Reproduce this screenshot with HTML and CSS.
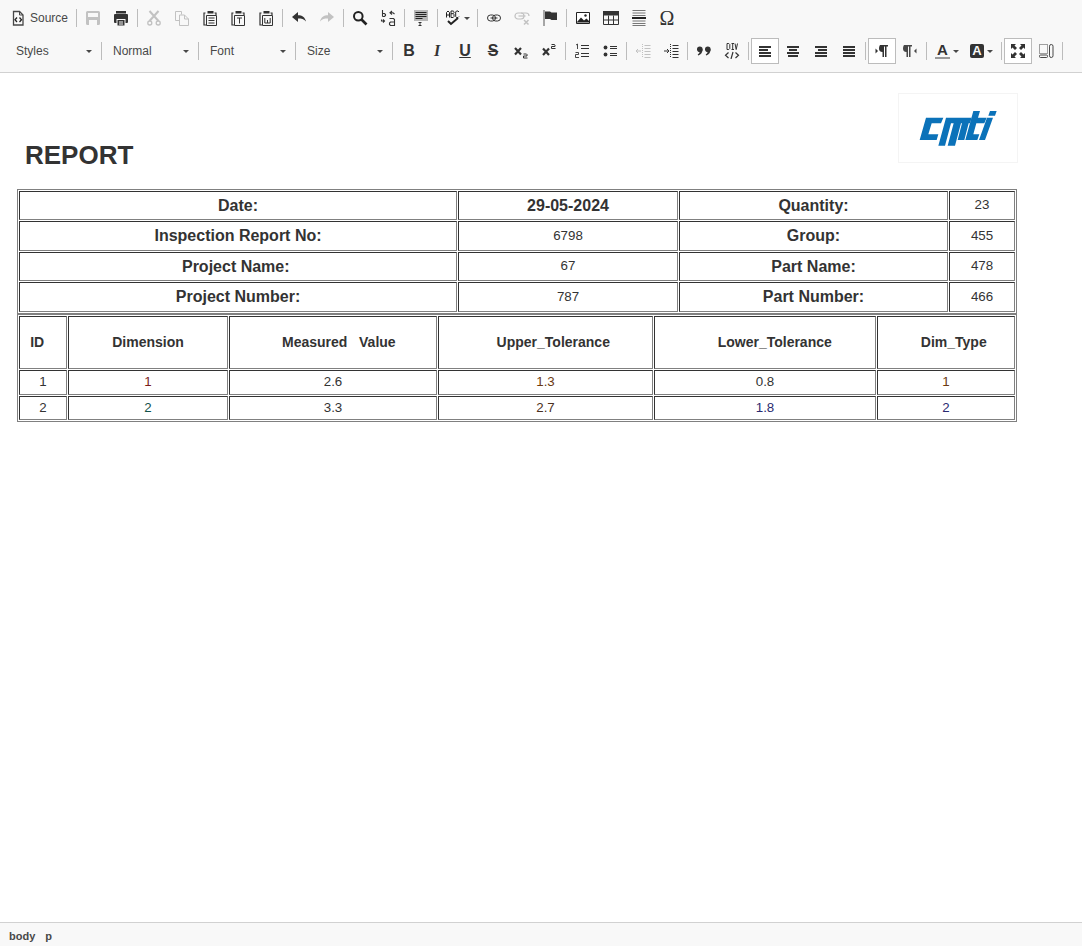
FILE: index.html
```html
<!DOCTYPE html>
<html>
	<head>
		<meta charset="UTF-8">
		<title>Report</title>
		<link rel="stylesheet" href="styles.css">
	</head>
	<body>
		<div class="toolbar">
			<div class="tool-row">
				<a class="btn btn-text">
					<svg width="16" height="16" viewBox="0 0 16 16"><path d="M3.500 1.500h6l3.500 3.500v10h-9.500z" fill="none" stroke="#474747" stroke-width="1.300"/><path d="M9.500 1.500v3.500h3.500" fill="none" stroke="#474747"/><path d="M7 7.500l-2 2.300 2 2.200M9.500 7.500l2 2.300-2 2.200" fill="none" stroke="#222" stroke-width="1.300"/></svg>
					<span>Source</span>
				</a>
				<i class="sep"></i>
				<a class="btn off"><svg width="16" height="16" viewBox="0 0 16 16"><path fill-rule="evenodd" d="M1 2.500q0-1.500 1.500-1.500h11q1.500 0 1.500 1.500v11q0 1.500-1.500 1.500h-11q-1.500 0-1.500-1.500zM3 3v4h10V3zM4 10v5h8v-5z" fill="#474747"/></svg></a>
				<a class="btn"><svg width="16" height="16" viewBox="0 0 16 16"><path fill-rule="evenodd" d="M3 1h10v2.500H3zM1 5q0-1 1-1h12q1 0 1 1v7q0 1-1 1h-1.500v-4h-9v4H2q-1 0-1-1zM4.500 10h7v5.500h-7zM6 11.500v1h4v-1zM6 13.500v1h4v-1z" fill="#333"/></svg></a>
				<i class="sep"></i>
				<a class="btn off"><svg width="16" height="16" viewBox="0 0 16 16"><path d="M3.500 1l9 10M12.500 1l-9 10" stroke="#474747" stroke-width="2" fill="none"/><circle cx="3.800" cy="13" r="2" fill="none" stroke="#474747" stroke-width="1.300"/><circle cx="12.200" cy="13" r="2" fill="none" stroke="#474747" stroke-width="1.300"/></svg></a>
				<a class="btn off"><svg width="16" height="16" viewBox="0 0 16 16"><path d="M1.500 1.500h6v3M1.500 1.500v9h4M5.500 5h5l4 4v6.500h-9zM10.500 5v4h4" fill="none" stroke="#474747"/></svg></a>
				<a class="btn"><svg width="16" height="16" viewBox="0 0 16 16"><path d="M3.500 3H2v12h2M12.500 3h1.500v2" fill="none" stroke="#333" stroke-width="1.200"/><path d="M5.500 1h6v2.500h-6z" fill="#333"/><path d="M4.500 5.500h10v10h-10z" fill="#f8f8f8" stroke="#333"/><path d="M6.500 8h6M6.500 10.500h6M6.500 13h6" stroke="#333"/></svg></a>
				<a class="btn"><svg width="16" height="16" viewBox="0 0 16 16"><path d="M3.500 3H2v12h2M12.500 3h1.500v2" fill="none" stroke="#333" stroke-width="1.200"/><path d="M5.500 1h6v2.500h-6z" fill="#333"/><path d="M4.500 5.500h10v10h-10z" fill="#f8f8f8" stroke="#333"/><path d="M7 8h5M9.500 8v5.500" stroke="#333"/></svg></a>
				<a class="btn"><svg width="16" height="16" viewBox="0 0 16 16"><path d="M3.500 3H2v12h2M12.500 3h1.500v2" fill="none" stroke="#333" stroke-width="1.200"/><path d="M5.500 1h6v2.500h-6z" fill="#333"/><path d="M4.500 5.500h10v10h-10z" fill="#f8f8f8" stroke="#333"/><path d="M6.800 8v5h5.400V8M9.500 10v3" fill="none" stroke="#333"/></svg></a>
				<i class="sep"></i>
				<a class="btn"><svg width="16" height="16" viewBox="0 0 16 16"><path d="M1 7l6-5v3.200c4 0 7 1.800 8 6.300-2-2.500-4.500-3-8-3V12z" fill="#333"/></svg></a>
				<a class="btn off"><svg width="16" height="16" viewBox="0 0 16 16"><path d="M15 7L9 2v3.200c-4 0-7 1.800-8 6.300 2-2.500 4.500-3 8-3V12z" fill="#474747"/></svg></a>
				<i class="sep"></i>
				<a class="btn"><svg width="16" height="16" viewBox="0 0 16 16"><circle cx="6.300" cy="6.300" r="4.300" fill="none" stroke="#222" stroke-width="2"/><path d="M9.500 9.500l5 5" stroke="#222" stroke-width="2.600"/></svg></a>
				<a class="btn"><svg width="16" height="16" viewBox="0 0 16 16"><path d="M2.500 0v6.500M2.500 3.500h2l1 1v1l-1 1h-2M12 1l-2 1.800 2 1.700M10 2.800h3l1.500 1.200M1.500 9.500v1.500h3M3 9.500l1.500 1.500L3 12.500M9.500 8.500h4l1 1v6.500M14.500 12h-4l-1 1v1.500l1 1h4" fill="none" stroke="#333" stroke-width="1.100"/></svg></a>
				<i class="sep"></i>
				<a class="btn"><svg width="16" height="16" viewBox="0 0 16 16"><path d="M1 0h14v11H1z" fill="#b8b8b8"/><path d="M2.500 2.500h11M2.500 4.500h11M2.500 6.500h11M2.500 8.500h7" stroke="#222"/><path d="M5.500 12.500h3M7 12.500v3M5.500 15.500h3" stroke="#333"/></svg></a>
				<i class="sep"></i>
				<a class="btn btn-arrow"><svg width="16" height="16" viewBox="0 0 16 16"><path d="M1.500 7.500V2.500L3 1l1.500 1.500v5M1.500 5h3M6 1v6.500M6 1h2.200l.8.800v1l-.8.900H6M8.200 3.700l.8.900v2l-.8.900H6M14 2l-1-1h-1.500l-.8 1v4.500l.8 1H13l1-1" fill="none" stroke="#222"/><path d="M3 11l3 3 7-6" fill="none" stroke="#222" stroke-width="2"/></svg><b class="caret"></b></a>
				<i class="sep"></i>
				<a class="btn"><svg width="16" height="16" viewBox="0 0 16 16"><rect x="1.500" y="5" width="8" height="6" rx="3" fill="none" stroke="#333"/><rect x="6.500" y="5" width="8" height="6" rx="3" fill="none" stroke="#333"/><path d="M4.500 8h7" stroke="#333"/></svg></a>
				<a class="btn off"><svg width="16" height="16" viewBox="0 0 16 16"><rect x="1" y="3" width="9" height="6" rx="3" fill="none" stroke="#474747" stroke-width="1.200"/><path d="M7 3h5q3 0 3 3" fill="none" stroke="#474747" stroke-width="1.200"/><path d="M4.500 6h7" stroke="#474747" stroke-width="1.200"/><path d="M10 10l4.500 4.500M14.500 10L10 14.500" stroke="#474747" stroke-width="1.500"/></svg></a>
				<a class="btn"><svg width="16" height="16" viewBox="0 0 16 16"><path d="M2 0v16" stroke="#555"/><path d="M3 1.500h5l1.500 1h5.500v7.500H9.500L8 9H3z" fill="#333"/></svg></a>
				<i class="sep"></i>
				<a class="btn"><svg width="16" height="16" viewBox="0 0 16 16"><path d="M1.500 2.500h13v11h-13z" fill="#fff" stroke="#222"/><path d="M2 12l4-4.500 3 3 2.500-2 2.500 2.500v1.500H2z" fill="#222"/><circle cx="10.500" cy="5.500" r="1.200" fill="#222"/></svg></a>
				<a class="btn"><svg width="16" height="16" viewBox="0 0 16 16"><path d="M.5 1.500h15v13H.5z" fill="#f8f8f8" stroke="#333"/><path d="M0 1h16v4.500H0z" fill="#333"/><path d="M.5 10h15M5.500 5.500v9M10.500 5.500v9" stroke="#333"/></svg></a>
				<a class="btn"><svg width="16" height="16" viewBox="0 0 16 16"><path d="M1.500.5h13M1.500 3h13M1.500 5.500h13M1.500 11h13M1.500 13.500h13M1.500 15.500h13" stroke="#777"/><path d="M1 8h14" stroke="#222" stroke-width="2"/></svg></a>
				<a class="btn"><span class="omega">Ω</span></a>
			</div>
			<div class="tool-row">
				<a class="combo"><span>Styles</span><b class="caret"></b></a>
				<i class="sep"></i>
				<a class="combo"><span>Normal</span><b class="caret"></b></a>
				<i class="sep"></i>
				<a class="combo"><span>Font</span><b class="caret"></b></a>
				<i class="sep"></i>
				<a class="combo"><span>Size</span><b class="caret"></b></a>
				<i class="sep"></i>
				<a class="btn"><span class="fmt fmt-b">B</span></a>
				<a class="btn"><span class="fmt fmt-i">I</span></a>
				<a class="btn"><span class="fmt fmt-u">U</span></a>
				<a class="btn"><span class="fmt fmt-s">S</span></a>
				<a class="btn"><svg width="16" height="16" viewBox="0 0 16 16"><path d="M2 5l6 6.500M8 5l-6 6.500" stroke="#333" stroke-width="2.200"/><path d="M10.500 11h3l.5.500v1.500h-3.500v2h4" fill="none" stroke="#333"/></svg></a>
				<a class="btn"><svg width="16" height="16" viewBox="0 0 16 16"><path d="M2 5.500l6 6.500M8 5.500L2 12" stroke="#333" stroke-width="2.200"/><path d="M10.500 1.500h3l.5.500v1.500h-3.500v2h4" fill="none" stroke="#333"/></svg></a>
				<i class="sep"></i>
				<a class="btn"><svg width="16" height="16" viewBox="0 0 16 16"><path d="M7 2.500h8M7 5.500h8M7 10.500h8M7 13.500h8" stroke="#333"/><path d="M2 2l1.500-1v5M1.500 9.500h3v2h-3v3h3.500" fill="none" stroke="#333" stroke-width=".9"/></svg></a>
				<a class="btn"><svg width="16" height="16" viewBox="0 0 16 16"><circle cx="3.500" cy="4.500" r="1.900" fill="#333"/><circle cx="3.500" cy="11.500" r="1.900" fill="#333"/><path d="M8 3.500h7M8 5.500h7M8 10.500h7M8 12.500h7" stroke="#333"/></svg></a>
				<i class="sep"></i>
				<a class="btn off"><svg width="16" height="16" viewBox="0 0 16 16"><path d="M7.500 1v14" stroke="#474747" stroke-dasharray="1 1"/><path d="M9.500 2.500h6M9.500 5.500h6M9.500 8.500h6M9.500 11.500h6M9.500 14.500h6M1 8h5M1 8l2-2M1 8l2 2" fill="none" stroke="#474747"/></svg></a>
				<a class="btn"><svg width="16" height="16" viewBox="0 0 16 16"><path d="M7.500 1v14" stroke="#333" stroke-dasharray="1 1"/><path d="M9.500 2.500h6M9.500 5.500h6M9.500 8.500h6M9.500 11.500h6M9.500 14.500h6M1 8h5M6 8L4 6M6 8l-2 2" fill="none" stroke="#333"/></svg></a>
				<i class="sep"></i>
				<a class="btn"><svg width="16" height="16" viewBox="0 0 16 16"><circle cx="3.800" cy="6.200" r="2.800" fill="#333"/><circle cx="11.800" cy="6.200" r="2.800" fill="#333"/><path d="M6.600 6.200c0 3-1.500 5.300-4.300 6.300l-.6-1c1.500-.8 2-2 2-3.500zM14.600 6.200c0 3-1.500 5.300-4.300 6.300l-.6-1c1.500-.8 2-2 2-3.500z" fill="#333"/></svg></a>
				<a class="btn"><svg width="16" height="16" viewBox="0 0 16 16"><path d="M3 .5h1.800l1 1v4l-1 1H3zM7.500.5h2.500M8.700.5v6M7.500 6.500h2.500M11 .5l1.200 6 1.300-6" fill="none" stroke="#333"/><path d="M4.500 9.500l-3 2.800 3 2.700M11.500 9.500l3 2.800-3 2.700M9 9l-2 7" fill="none" stroke="#333" stroke-width="1.200"/></svg></a>
				<i class="sep"></i>
				<a class="btn on"><svg width="16" height="16" viewBox="0 0 16 16"><path d="M2 4h12M2 7h9M2 10h12M2 13h12" stroke="#333" stroke-width="2"/></svg></a>
				<a class="btn"><svg width="16" height="16" viewBox="0 0 16 16"><path d="M2 4h12M4 7h8M2 10h12M3 13h10" stroke="#333" stroke-width="2"/></svg></a>
				<a class="btn"><svg width="16" height="16" viewBox="0 0 16 16"><path d="M2 4h12M5 7h9M2 10h12M2 13h12" stroke="#333" stroke-width="2"/></svg></a>
				<a class="btn"><svg width="16" height="16" viewBox="0 0 16 16"><path d="M2 4h12M2 7h12M2 10h12M2 13h12" stroke="#333" stroke-width="2"/></svg></a>
				<i class="sep"></i>
				<a class="btn on"><svg width="16" height="16" viewBox="0 0 16 16"><path d="M1.500 5.500l2.500 2.500-2.500 2.500z" fill="#333"/><path d="M6 2h8v1.500h-1.500V14h-1.500V3.500h-1V14H8.500V9C6 9 5 7.500 5 5.500S6 2 6 2z" fill="#333"/></svg></a>
				<a class="btn"><svg width="16" height="16" viewBox="0 0 16 16"><path d="M14.500 5.500L12 8l2.500 2.500z" fill="#474747"/><path d="M2 2h8v1.500H8.500V14H7V3.500H6V14H4.500V9C2 9 1 7.500 1 5.500S2 2 2 2z" fill="#474747"/></svg></a>
				<i class="sep"></i>
				<a class="btn btn-arrow btn-color"><span class="color-a">A</span><b class="caret"></b></a>
				<a class="btn btn-arrow btn-color"><span class="color-bg">A</span><b class="caret"></b></a>
				<i class="sep"></i>
				<a class="btn on"><svg width="16" height="16" viewBox="0 0 16 16"><path d="M1 1h5L4.500 2.500 7 5 5 7 2.500 4.500 1 6zM15 1v5l-1.500-1.500L11 7 9 5l2.500-2.500L10 1zM1 15v-5l1.500 1.500L5 9l2 2-2.500 2.500L6 15zM15 15h-5l1.500-1.500L9 11l2-2 2.500 2.500L15 10z" fill="#333"/></svg></a>
				<a class="btn"><svg width="16" height="16" viewBox="0 0 16 16"><path d="M1.500 1.500h8v9h-8z" fill="none" stroke="#474747" stroke-dasharray="1 1"/><rect x="11.500" y="1.500" width="3.500" height="13" rx="1.700" fill="none" stroke="#474747"/><rect x="1.500" y="12" width="8" height="2.500" rx="1" fill="none" stroke="#474747"/></svg></a>
				<i class="sep"></i>
			</div>
		</div>

		<div class="content">
			<div class="head">
				<h1>REPORT</h1>
				<div class="logo">
					<svg width="120" height="70" viewBox="0 0 120 70"><g fill="#0b72b9" transform="translate(17 12) scale(.3333)"><path d="M14 105L33 38H85L78 55H50L40 88H70L65 105z"/><path d="M93 38H170L165 55H161L148 105H128L141 55H138L120 122H98L116 55H108L90 122H70z"/><path d="M175 18H195L189 38H215L208 55H184L175 88H193L187 105H151z"/><path d="M225 18H245L240 32H220zM216 38H234L210 105H192z"/></g></svg>
				</div>
			</div>
			<div class="report">
				<table class="info">
					<colgroup><col class="i1"><col class="i2"><col class="i3"><col class="i4"></colgroup>
					<tr class="short"><th>Date:</th><th>29-05-2024</th><th>Quantity:</th><td>23</td></tr>
					<tr><th>Inspection Report No:</th><td>6798</td><th>Group:</th><td>455</td></tr>
					<tr class="short"><th>Project Name:&nbsp;</th><td>67</td><th>Part Name:</th><td>478</td></tr>
					<tr><th>Project Number:</th><td>787</td><th>Part Number:</th><td>466</td></tr>
				</table>
				<table class="dims">
					<colgroup><col class="d1"><col class="d2"><col class="d3"><col class="d4"><col class="d5"><col class="d6"></colgroup>
					<tr class="dims-head"><th>ID&nbsp;&nbsp;&nbsp;</th><th>Dimension</th><th>&nbsp;&nbsp;&nbsp;Measured &nbsp; Value</th><th>&nbsp;&nbsp;&nbsp;&nbsp;Upper_Tolerance</th><th>&nbsp;&nbsp;&nbsp;&nbsp;&nbsp;Lower_Tolerance</th><th>&nbsp;&nbsp;&nbsp;&nbsp;Dim_Type</th></tr>
					<tr class="r1"><td>1</td><td>1</td><td>2.6</td><td>1.3</td><td>0.8</td><td>1</td></tr>
					<tr class="r2"><td>2</td><td>2</td><td>3.3</td><td>2.7</td><td>1.8</td><td>2</td></tr>
				</table>
			</div>
		</div>

		<div class="path"><a>body</a><a>p</a></div>
	</body>
</html>
```

FILE: styles.css
```css
* {margin:0; padding:0; box-sizing:border-box;}
html, body {height:100%;}
body {display:flex; flex-direction:column; background:#fff; color:#333; font-family:"Liberation Sans", Arial, sans-serif; overflow:hidden;}

/* toolbar */
.toolbar {flex:none; height:73px; padding:5px 0 0 6px; background:#f8f8f8; border-bottom:1px solid #d1d1d1;}
.tool-row {display:flex; align-items:center; height:26px; margin-bottom:7px;}
.sep {display:block; flex:none; width:1px; height:18px; margin:0 2px; background:#bcbcbc;}
.btn {display:flex; flex:none; align-items:center; justify-content:center; width:28px; height:26px;}
.btn.off svg {opacity:.3;}
.btn.on {background:#fff; border:1px solid #bcbcbc;}
.btn-text {width:68px; justify-content:flex-start; padding-left:4px; font-size:12px; color:#484848;}
.btn-text span {margin-left:4px;}
.btn-arrow {width:35px; justify-content:flex-start; padding-left:5px;}
.btn-color {padding-left:6px;}
.caret {display:block; flex:none; width:0; height:0; margin-left:3px; border-left:3px solid transparent; border-right:3px solid transparent; border-top:3px solid #484848;}

.combo {display:flex; flex:none; align-items:center; justify-content:space-between; width:92px; height:26px; padding:0 7px 0 9px; font-size:12px; color:#484848;}
.tool-row .combo:first-child {margin-left:1px;}

.omega {font:20px "Liberation Serif", serif; color:#333;}
.fmt {font-size:16px; font-weight:bold; color:#333; line-height:16px;}
.fmt-i {font-style:italic; font-family:"Liberation Serif", serif;}
.fmt-u {text-decoration:underline;}
.fmt-s {text-decoration:line-through;}
.color-a {display:block; width:15px; font-size:15px; font-weight:bold; line-height:14px; text-align:center; border-bottom:2px solid #999;}
.color-bg {display:block; width:14px; height:14px; background:#333; border-radius:2px; color:#f8f8f8; font-size:13px; font-weight:bold; line-height:14px; text-align:center;}

/* editing area */
.content {flex:1; padding:20px 64px 0 17px;}
.head {display:flex; justify-content:space-between; align-items:flex-end; height:96px;}
.head h1 {padding:0 0 19px 8px; font-size:26px; line-height:30px;}
.logo {width:120px; height:70px; margin-bottom:26px; border:1px solid #f4f4f4; align-self:flex-start;}
.logo svg {display:block; margin:-1px;}

table {display:table; width:1000px; table-layout:fixed; border:1px solid #808080; border-spacing:1px;}
th, td {border:1px solid; border-color:#333 #808080 #808080 #333; text-align:center; overflow:hidden;}
.info th {height:30px; font-size:16px;}
.info td {height:30px; font-size:13.33px; padding-bottom:1px;}
.info .short th {height:29px;}
.info .short td {height:29px; padding-bottom:3px;}
.dims th {height:53px; padding-bottom:2px; font-size:14px;}
.dims td {padding-bottom:2px; font-size:13.33px;}
.i1 {width:438px;} .i2 {width:220px;} .i3 {width:269px;}
.d1 {width:48px;} .d2 {width:160px;} .d3 {width:208px;} .d4 {width:215px;} .d5 {width:222px;}
.r1 td {height:25px;}
.r2 td {height:24px;}
.r1 td:nth-child(2) {color:#7a1c1c;}
.r1 td:nth-child(4), .r1 td:nth-child(6) {color:#6b3a12;}
.r2 td:nth-child(2) {color:#12524a;}
.r2 td:nth-child(4) {color:#4a3020;}
.r2 td:nth-child(5), .r2 td:nth-child(6) {color:#2a2a70;}

/* path bar */
.path {flex:none; height:24px; padding:7px 0 0 9px; background:#f8f8f8; border-top:1px solid #d1d1d1; font-size:11px; font-weight:bold; line-height:13px; color:#484848;}
.path a {margin-right:10px;}
```
